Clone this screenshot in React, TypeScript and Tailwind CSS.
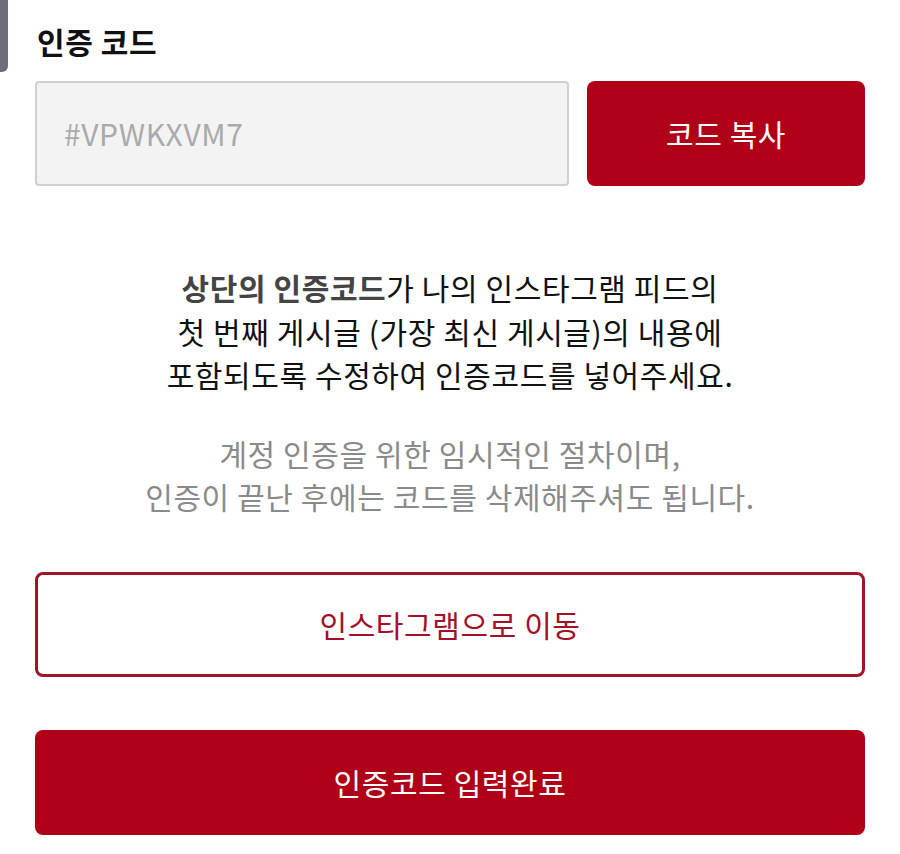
import React from "react";

export default function App() {
  return (
    <div
      className="relative w-[900px] h-[854px] bg-white overflow-hidden tracking-[0.6px]"
      style={{ fontFamily: '"Noto Sans CJK KR", "Noto Sans", sans-serif' }}
    >
      <div className="absolute left-0 top-0 w-[8px] h-[72px] bg-[#6e6d78] rounded-br-[6px]" />
      <div className="px-[35px] pt-[20px]">
        <h1 className="text-[30px] leading-[42px] font-bold text-[#111] pl-[2px]">인증 코드</h1>
        <div className="mt-[19px] flex gap-[18px] h-[105px]">
          <div className="flex-1 flex items-center bg-[#f3f3f3] border-2 border-[#d0d0d0] rounded-[4px] pl-[27px] text-[30px] text-[#aaaaaa]">
            #VPWKXVM7
          </div>
          <button className="w-[278px] bg-[#af0017] rounded-[8px] text-white text-[30px]">
            코드 복사
          </button>
        </div>
        <p className="mt-[80px] text-center text-[30px] leading-[43.5px] text-[#111]">
          <span className="font-bold text-[#444]">상단의 인증코드</span>가 나의 인스타그램 피드의
          <br />
          첫 번째 게시글 (가장 최신 게시글)의 내용에
          <br />
          포함되도록 수정하여 인증코드를 넣어주세요.
        </p>
        <p className="mt-[35px] text-center text-[30px] leading-[43px] text-[#8a8a8a]">
          계정 인증을 위한 임시적인 절차이며,
          <br />
          인증이 끝난 후에는 코드를 삭제해주셔도 됩니다.
        </p>
        <button className="mt-[54px] w-full h-[105px] border-[3px] border-[#9e1529] rounded-[8px] text-[30px] text-[#a2102a]">
          인스타그램으로 이동
        </button>
        <button className="mt-[53px] w-full h-[105px] bg-[#af0017] rounded-[8px] text-[30px] text-white">
          인증코드 입력완료
        </button>
      </div>
    </div>
  );
}
